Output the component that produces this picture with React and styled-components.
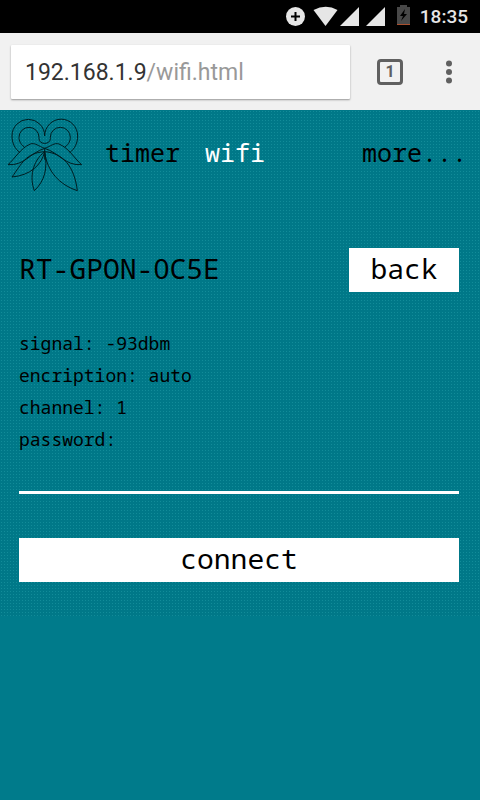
import React from "react";
import styled, { createGlobalStyle } from "styled-components";

const MONO = '"Droid Sans Mono", "Noto Sans Mono", "DejaVu Sans Mono", "Liberation Mono", monospace';

const Global = createGlobalStyle`
  * { box-sizing: border-box; }
  body { margin: 0; background: #007b8b; }
`;

const Screen = styled.div`
  min-height: 100vh;
  background: #007b8b;
  color: #000;
  font-family: ${MONO};
`;

const StatusBar = styled.div`
  display: flex;
  align-items: center;
  justify-content: flex-end;
  height: 33px;
  padding-right: 12px;
  background: #000;
  color: #e6e6e6;
`;

const StatusIcons = styled.svg`
  display: block;
  width: 126px;
  height: 33px;
  margin-right: 10px;
`;

const Clock = styled.time`
  font: 500 19px/34px Roboto, sans-serif;
`;

const BrowserBar = styled.header`
  display: flex;
  align-items: center;
  height: 77px;
  padding: 0 23px 0 11px;
  background: #f1f1f1;
`;

const Address = styled.div`
  flex: 1;
  height: 54px;
  padding: 0 14px;
  margin-right: 27px;
  border-radius: 1px;
  background: #fff;
  box-shadow: 0 1px 2px rgba(0, 0, 0, 0.38);
  color: #333;
  font: 400 23px/56px Roboto, sans-serif;
  white-space: nowrap;
`;

const Path = styled.span`
  color: #999;
`;

const IconButton = styled.button`
  display: grid;
  place-items: center;
  width: ${({ $width }) => $width}px;
  height: 26px;
  padding: 0;
  border: ${({ $boxed }) => ($boxed ? "3px solid #606060" : "0")};
  border-radius: 4px;
  background: none;
  color: #606060;
  font: 700 16px/20px Roboto, sans-serif;
`;

const Menu = styled(IconButton)`
  margin-left: 38px;
`;

const Textured = styled.main`
  padding-bottom: 34px;
  background-color: #007888;
  background-image: radial-gradient(circle at center, #128c99 0, transparent 1px);
  background-size: 3px 3px;
`;

const Nav = styled.nav`
  display: flex;
  align-items: center;
  height: 92px;
  padding-right: 13px;
`;

const Logo = styled.svg`
  width: 100px;
  height: 92px;
  margin-right: 5px;
`;

const NavLink = styled.a`
  margin-right: 25px;
  padding-bottom: 8px;
  color: ${({ $active }) => ($active ? "#fff" : "#000")};
  font-size: 25px;
  line-height: 32px;
  text-decoration: none;

  &:last-child { margin-left: auto; margin-right: 0; }
`;

const Form = styled.form`
  padding: 46px 21px 0 19px;
`;

const TitleRow = styled.div`
  display: flex;
  align-items: center;
  justify-content: space-between;
`;

const Title = styled.h1`
  margin: 0;
  font-size: 28px;
  line-height: 40px;
  height: 44px;
  font-weight: 400;
`;

const PlainZero = styled.span`
  font-family: "Noto Sans", sans-serif;
`;

const Button = styled.button`
  display: block;
  width: ${({ $wide }) => ($wide ? "100%" : "110px")};
  height: 44px;
  padding: 0 0 4px;
  border: 0;
  background: #fff;
  color: #000;
  font: 400 28px/40px ${MONO};
`;

const Details = styled.div`
  margin-top: 35px;
  font-size: 18px;
  line-height: 32px;
`;

const Line = styled.div``;

const Label = styled.label`
  display: block;
`;

const Password = styled.input`
  display: block;
  width: 100%;
  height: 39px;
  margin-bottom: 44px;
  padding: 0;
  border: 0;
  border-bottom: 3px solid #fff;
  border-radius: 0;
  outline: 0;
  background: transparent;
  color: #fff;
  font: 400 18px/32px ${MONO};
`;

export default function App() {
  return (
    <Screen>
      <Global />
      <StatusBar>
        <StatusIcons viewBox="0 0 126 33" aria-hidden="true">
          <g fill="#e6e6e6">
            <circle cx="11.5" cy="16.5" r="9.5" />
            <path d="M29.5 10 Q42 3.500 53.500 10 L41.500 26 Z" />
            <path d="M56 26 L75 7 V26 Z M82 26 L101 7 V26 Z" />
          </g>
          <path d="M11.500 12 V21 M7 16.500 H16" stroke="#000" strokeWidth="2" />
          <path d="M113 7 H116 V5 H123 V7 H126 V24 H113 Z" fill="#484848" />
          <path d="M113 24.500 H126" stroke="#a9502f" />
          <path d="M121 9 L116 16 H119 L117 21 L123 14 H120 Z" fill="#000" />
        </StatusIcons>
        <Clock>18:35</Clock>
      </StatusBar>
      <BrowserBar>
        <Address>192.168.1.9<Path>/wifi.html</Path></Address>
        <IconButton type="button" $width={26} $boxed aria-label="1 open tab">1</IconButton>
        <Menu type="button" $width={16} aria-label="Browser menu">
          <svg width="8" height="26" viewBox="0 0 8 26" fill="#606060">
            <circle cx="4" cy="4.500" r="3" />
            <circle cx="4" cy="13" r="3" />
            <circle cx="4" cy="21.500" r="3" />
          </svg>
        </Menu>
      </BrowserBar>
      <Textured>
        <Nav>
          <Logo viewBox="0 6 300 276" fill="none" stroke="#001c20" strokeWidth="3" aria-hidden="true">
            <path d="M60 134 C44 122 36 104 36 84 A49 50 0 0 1 134 84 A49 50 0 0 1 233 84 C233 104 225 122 209 134" />
            <path d="M73 117 C61 108 57 98 57 88 A30 30 0 0 1 117 88 V92 C117 111 151 111 151 92 V88 A30 30 0 0 1 211 88 C211 98 207 108 195 117" />
            <path d="M134 121 C116 115 105 103 91 108 C62 120 42 155 24 170 C72 174 90 135 134 121 Z" />
            <path d="M134 121 C152 115 163 103 177 108 C207 120 226 155 245 170 C196 174 178 135 134 121 Z" />
            <path d="M134 131 C76 135 65 168 36 207 C92 202 125 170 134 131 Z" />
            <path d="M134 121 V155 M134 131 C97 160 88 208 103 248 C134 219 144 181 134 131 Z" />
            <path d="M134 131 C188 135 223 174 232 248 C178 230 141 190 134 131 Z" />
          </Logo>
          <NavLink href="#timer">timer</NavLink>
          <NavLink href="#wifi" $active aria-current="page">wifi</NavLink>
          <NavLink href="#more">more...</NavLink>
        </Nav>
        <Form onSubmit={(event) => event.preventDefault()}>
          <TitleRow>
            <Title>RT-GPON-<PlainZero>0</PlainZero>C5E</Title>
            <Button type="button">back</Button>
          </TitleRow>
          <Details>
            <Line>signal: -93dbm</Line>
            <Line>encription: auto</Line>
            <Line>channel: 1</Line>
            <Label htmlFor="password">password:</Label>
          </Details>
          <Password id="password" type="password" />
          <Button type="submit" $wide>connect</Button>
        </Form>
      </Textured>
    </Screen>
  );
}
